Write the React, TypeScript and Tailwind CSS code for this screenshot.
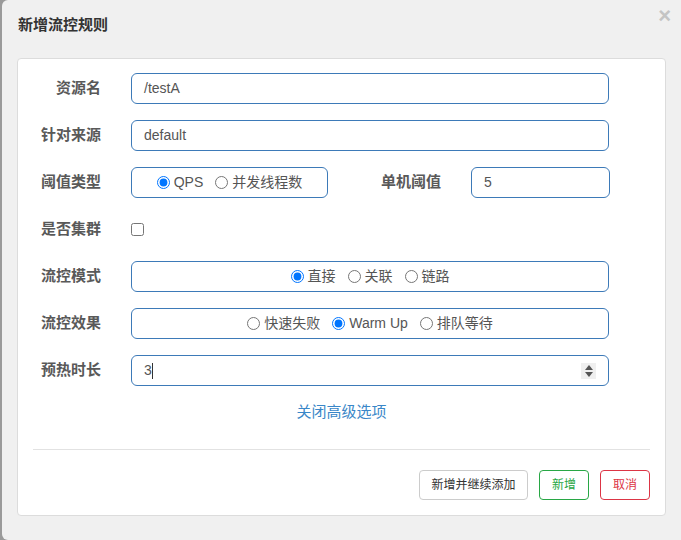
import React from 'react';

const font = { fontFamily: '"Liberation Sans", "Noto Sans CJK SC", sans-serif' };

const Label: React.FC<{ text: string; w?: string }> = ({ text, w = 'w-[83px]' }) => (
  <div className={`${w} shrink-0 text-right text-[15px] font-bold text-[#595959]`}>{text}</div>
);

const Radio: React.FC<{ name: string; label: string; checked?: boolean }> = ({ name, label, checked }) => (
  <label className="inline-flex items-center gap-[4px] text-[14px] text-[#555]">
    <input type="radio" name={name} defaultChecked={checked} className="m-0 w-[13px] h-[13px]" />
    <span>{label}</span>
  </label>
);

const Box: React.FC<{ children: React.ReactNode; className?: string }> = ({ children, className = '' }) => (
  <div
    className={`h-[31px] rounded-[6px] border border-[#3d7ab8] bg-white flex items-center ${className}`}
  >
    {children}
  </div>
);

const App: React.FC = () => {
  return (
    <div className="w-[681px] h-[540px] overflow-hidden bg-[#9a9a9a]" style={font}>
      <div className="ml-[2px] h-full bg-[#f0f0f0] rounded-tl-[6px] rounded-bl-[6px] relative">
        {/* Header */}
        <div className="h-[58px] flex items-center pl-[16px] pb-[8px]">
          <h1 className="text-[15px] font-bold text-[#333]">新增流控规则</h1>
        </div>
        <button className="absolute right-[10px] top-[5px] text-[22px] font-bold leading-none text-[#c4c4c4]">
          ×
        </button>

        {/* Card */}
        <div className="ml-[15px] w-[649px] h-[458px] bg-white border border-[#dcdcdc] rounded-[4px] px-[15px] pt-[14px]">
          <div className="flex flex-col gap-[16px]">
            <div className="flex items-center gap-[30px] -ml-[15px]">
              <Label text="资源名" />
              <Box className="w-[478px] px-[12px] text-[14px] text-[#555]">/testA</Box>
            </div>
            <div className="flex items-center gap-[30px] -ml-[15px]">
              <Label text="针对来源" />
              <Box className="w-[478px] px-[12px] text-[14px] text-[#555]">default</Box>
            </div>
            <div className="flex items-center -ml-[15px]">
              <Label text="阈值类型" />
              <Box className="ml-[30px] w-[197px] justify-center gap-[12px]">
                <Radio name="grade" label="QPS" checked />
                <Radio name="grade" label="并发线程数" />
              </Box>
              <Label text="单机阈值" w="w-[113px]" />
              <Box className="ml-[30px] w-[139px] px-[12px] text-[14px] text-[#555]">5</Box>
            </div>
            <div className="flex items-center gap-[30px] -ml-[15px] h-[31px]">
              <Label text="是否集群" />
              <input type="checkbox" className="m-0 w-[13px] h-[13px]" />
            </div>
            <div className="flex items-center gap-[30px] -ml-[15px]">
              <Label text="流控模式" />
              <Box className="w-[478px] justify-center gap-[12px]">
                <Radio name="strategy" label="直接" checked />
                <Radio name="strategy" label="关联" />
                <Radio name="strategy" label="链路" />
              </Box>
            </div>
            <div className="flex items-center gap-[30px] -ml-[15px]">
              <Label text="流控效果" />
              <Box className="w-[478px] justify-center gap-[12px]">
                <Radio name="behavior" label="快速失败" />
                <Radio name="behavior" label="Warm Up" checked />
                <Radio name="behavior" label="排队等待" />
              </Box>
            </div>
            <div className="flex items-center gap-[30px] -ml-[15px]">
              <Label text="预热时长" />
              <Box className="w-[478px] pl-[12px] pr-[12px] justify-between text-[14px] text-[#555]">
                <span className="flex items-center">
                  3<span className="inline-block w-px h-[16px] bg-[#333]" />
                </span>
                <span className="w-[15px] h-[16px] bg-[#efefef] flex flex-col items-center justify-center gap-[2px]">
                  <svg width="8" height="5" viewBox="0 0 8 5">
                    <path d="M0 5 L4 0 L8 5 Z" fill="#555" />
                  </svg>
                  <svg width="8" height="5" viewBox="0 0 8 5">
                    <path d="M0 0 L8 0 L4 5 Z" fill="#555" />
                  </svg>
                </span>
              </Box>
            </div>
          </div>

          <div className="mt-[16px] text-center text-[15px] leading-[20px] text-[#3a87c8]">关闭高级选项</div>

          <div className="mt-[27px] border-t border-[#e2e2e2]" />

          <div className="mt-[20px] flex justify-end gap-[11px]">
            <button className="h-[30px] w-[109px] rounded-[4px] border border-[#cccccc] bg-white text-[12px] text-[#333]">
              新增并继续添加
            </button>
            <button className="h-[30px] w-[50px] rounded-[4px] border border-[#28a745] bg-white text-[12px] text-[#28a745]">
              新增
            </button>
            <button className="h-[30px] w-[50px] rounded-[4px] border border-[#dc3545] bg-white text-[12px] text-[#dc3545]">
              取消
            </button>
          </div>
        </div>
      </div>
    </div>
  );
};

export default App;
